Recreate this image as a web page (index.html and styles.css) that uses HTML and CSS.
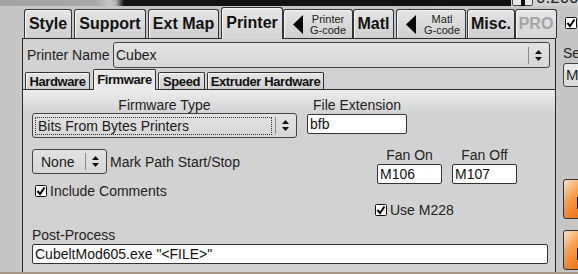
FILE: index.html
```html
<!DOCTYPE html>
<html>
<head>
<meta charset="utf-8">
<link rel="stylesheet" href="styles.css">
</head>
<body>
<div class="topbar">
  <div class="topfill"></div>
  <div class="spin"><span class="spin-mark"></span></div>
  <div class="topval">0.200</div>
</div>
<div class="window">
  <div class="center">
    <div class="tabs">
      <div class="tab w-style">Style</div>
      <div class="tab w-support">Support</div>
      <div class="tab w-ext">Ext Map</div>
      <div class="tab tab-active w-printer">Printer</div>
      <div class="tab tab-gcode w-pg">
        <svg class="tri" width="10" height="19" viewBox="0 0 10 19"><polygon points="10,0 10,19 0,9.5" fill="#000"/></svg>
        <div class="gtext"><span>Printer</span><span>G-code</span></div>
      </div>
      <div class="tab w-matl">Matl</div>
      <div class="tab tab-gcode w-mg">
        <svg class="tri" width="10" height="19" viewBox="0 0 10 19"><polygon points="10,0 10,19 0,9.5" fill="#000"/></svg>
        <div class="gtext"><span>Matl</span><span>G-code</span></div>
      </div>
      <div class="tab w-misc">Misc.</div>
      <div class="tab tab-pro w-pro">PRO</div>
    </div>
    <div class="panel">
      <div class="name-row">
        <span class="lbl name-lbl">Printer Name</span>
        <div class="select sel-name">
          <span class="sel-text">Cubex</span>
          <span class="sel-div"></span>
          <svg class="arrows" width="7" height="11" viewBox="0 0 7 11"><polygon points="0,4 3.5,0 7,4" fill="#111"/><polygon points="0,7 3.5,11 7,7" fill="#111"/></svg>
        </div>
      </div>
      <div class="subtabs">
        <div class="stab sw-hw">Hardware</div>
        <div class="stab stab-active sw-fw">Firmware</div>
        <div class="stab sw-sp">Speed</div>
        <div class="stab sw-ex">Extruder Hardware</div>
      </div>
      <div class="content">
        <div class="row-a">
          <div class="col-fw">
            <div class="lbl center-lbl">Firmware Type</div>
            <div class="select sel-fw">
              <span class="sel-text focus">Bits From Bytes Printers</span>
              <span class="sel-div"></span>
              <svg class="arrows" width="7" height="11" viewBox="0 0 7 11"><polygon points="0,4 3.5,0 7,4" fill="#111"/><polygon points="0,7 3.5,11 7,7" fill="#111"/></svg>
            </div>
          </div>
          <div class="col-ext">
            <div class="lbl center-lbl">File Extension</div>
            <div class="input inp-ext">bfb</div>
          </div>
        </div>
        <div class="row-b">
          <div class="col-left">
            <div class="mark-row">
              <div class="select sel-none">
                <span class="sel-text">None</span>
                <span class="sel-div"></span>
                <svg class="arrows" width="7" height="11" viewBox="0 0 7 11"><polygon points="0,4 3.5,0 7,4" fill="#111"/><polygon points="0,7 3.5,11 7,7" fill="#111"/></svg>
              </div>
              <span class="lbl">Mark Path Start/Stop</span>
            </div>
            <div class="check-row inc-row">
              <svg class="cb" width="12" height="12" viewBox="0 0 12 12"><rect x="0.5" y="0.5" width="11" height="11" rx="1" fill="#fff" stroke="#111"/><path d="M2.5 6 L5 9 L9.5 2.5" fill="none" stroke="#000" stroke-width="2"/></svg>
              <span class="lbl">Include Comments</span>
            </div>
          </div>
          <div class="col-right">
            <div class="fans">
              <div class="fan">
                <div class="lbl center-lbl">Fan On</div>
                <div class="input inp-fan">M106</div>
              </div>
              <div class="fan">
                <div class="lbl center-lbl">Fan Off</div>
                <div class="input inp-fan">M107</div>
              </div>
            </div>
            <div class="check-row m228-row">
              <svg class="cb" width="12" height="12" viewBox="0 0 12 12"><rect x="0.5" y="0.5" width="11" height="11" rx="1" fill="#fff" stroke="#111"/><path d="M2.5 6 L5 9 L9.5 2.5" fill="none" stroke="#000" stroke-width="2"/></svg>
              <span class="lbl">Use M228</span>
            </div>
          </div>
        </div>
        <div class="lbl post-lbl">Post-Process</div>
        <div class="input inp-post">CubeltMod605.exe "&lt;FILE&gt;"</div>
      </div>
    </div>
  </div>
  <div class="side">
    <svg class="cb side-cb" width="12" height="12" viewBox="0 0 12 12"><rect x="0.5" y="0.5" width="11" height="11" rx="1" fill="#fff" stroke="#111"/><path d="M2.5 6 L5 9 L9.5 2.5" fill="none" stroke="#000" stroke-width="2"/></svg>
    <div class="side-lbl">Se</div>
    <div class="side-box">M</div>
    <div class="orange ob1"><span class="ob-mark"></span></div>
    <div class="orange ob2"><span class="ob-mark"></span></div>
  </div>
</div>
<div class="bottomline"></div>
</body>
</html>
```

FILE: styles.css
```css
* { box-sizing: border-box; }
html, body { margin: 0; padding: 0; }
body {
  width: 578px;
  height: 274px;
  overflow: hidden;
  background: #c6c6c6;
  font-family: "Liberation Sans", Arial, sans-serif;
  color: #1e1e1e;
}

/* top strip */
.topbar {
  height: 6px;
  display: flex;
  overflow: hidden;
  background: #d0d0d0;
}
.topfill {
  width: 511px;
  flex: none;
  background: linear-gradient(to right, #a2a2a2 0, #a8a8a8 95px, #c6c6c6 110px, #b0b0b0 116px, #151515 124px, #111 511px);
}
.spin {
  width: 21px;
  flex: none;
  margin-left: 1px;
  margin-top: -4px;
  height: 10px;
  border: 1px solid #444;
  border-radius: 2px;
  background: #e8e8e8;
  display: flex;
  justify-content: center;
}
.spin-mark { width: 4px; height: 9px; background: #111; }
.topval {
  margin-left: 3px;
  margin-top: -10px;
  font-size: 17px;
  line-height: 16px;
  color: #222;
  white-space: nowrap;
}

/* window */
.window {
  display: flex;
  height: 266px;
  padding-left: 22px;
}
.center { width: 534px; flex: none; }

.tabs {
  height: 32px;
  display: flex;
  align-items: flex-end;
  padding-left: 2px;
  position: relative;
  z-index: 2;
}
.tab {
  height: 29px;
  border: 1px solid #333;
  border-bottom: none;
  border-radius: 3px 3px 0 0;
  background: linear-gradient(#e4e4e4, #cfcfcf);
  box-shadow: inset 1px 1px 0 #f6f6f6;
  display: flex;
  align-items: center;
  justify-content: center;
  font-weight: bold;
  font-size: 16px;
  color: #111;
  flex: none;
  white-space: nowrap;
}
.tab-active {
  height: 32px;
  margin-bottom: -1px;
  padding-bottom: 2px;
  background: linear-gradient(#e6e6e6, #d4d4d4);
}
.tab-pro { color: #a4a4a4; background: linear-gradient(#e6e6e6, #d6d6d6); }
.w-style { width: 48px; margin-right: 2px; }
.w-support { width: 72px; margin-right: 2px; }
.w-ext { width: 71px; margin-right: 2px; }
.w-printer { width: 62px; }
.w-pg { width: 70px; }
.w-matl { width: 41px; margin-right: 2px; }
.w-mg { width: 70px; margin-right: 1px; }
.w-misc { width: 48px; }
.w-pro { width: 42px; }

.tab-gcode {
  justify-content: flex-start;
  padding-left: 9px;
  gap: 7px;
}
.tri { display: block; flex: none; }
.gtext {
  display: flex;
  flex-direction: column;
  align-items: center;
  font-weight: normal;
  font-size: 11px;
  line-height: 11px;
  color: #222;
  padding-top: 1px;
  white-space: nowrap;
}
.w-mg .gtext { width: 38px; }

/* panel */
.panel {
  height: 234px;
  border: 1px solid #2a2a2a;
  border-bottom: none;
  background: #d2d2d2;
}
.lbl {
  font-size: 14px;
  line-height: 16px;
  color: #222;
  white-space: nowrap;
}
.name-row {
  display: flex;
  align-items: center;
  padding: 3px 0 0 4px;
}
.name-lbl { width: 86px; }

.select {
  height: 25px;
  border: 1px solid #444;
  border-radius: 3px;
  background: linear-gradient(#e2e2e2, #d6d6d6);
  display: flex;
  align-items: center;
  font-size: 14px;
  color: #1a1a1a;
  flex: none;
}
.sel-text {
  flex: 1;
  padding-left: 2px;
  white-space: nowrap;
}
.sel-div {
  width: 1px;
  height: 17px;
  background: #8a8a8a;
  margin-right: 6px;
}
.arrows { display: block; margin-right: 7px; }
.sel-name { width: 437px; height: 26px; }
.sel-fw { width: 265px; }
.sel-fw .sel-text.focus {
  margin: 0 3px 0 2px;
  padding-left: 2px;
  height: 18px;
  line-height: 16px;
  border: 1px dotted #333;
}
.sel-none { width: 75px; }
.sel-none .sel-text { padding-left: 8px; }

.subtabs {
  height: 21px;
  display: flex;
  align-items: flex-end;
  padding-left: 2px;
  position: relative;
  z-index: 2;
}
.stab {
  height: 17px;
  border: 1px solid #333;
  border-bottom: none;
  border-radius: 2px 2px 0 0;
  background: linear-gradient(#e4e4e4, #d0d0d0);
  box-shadow: inset 1px 1px 0 #f6f6f6;
  font-size: 13px;
  letter-spacing: -0.4px;
  font-weight: bold;
  color: #111;
  display: flex;
  align-items: center;
  justify-content: center;
  flex: none;
  white-space: nowrap;
}
.stab-active {
  height: 21px;
  margin-bottom: -1px;
  background: linear-gradient(#e6e6e6, #eaeaea);
  padding-bottom: 2px;
}
.sw-hw { width: 65px; margin-right: 3px; }
.sw-fw { width: 63px; margin-right: 2px; }
.sw-sp { width: 47px; margin-right: 2px; }
.sw-ex { width: 117px; }

.content {
  border-top: 1px solid #2a2a2a;
  background: linear-gradient(#ededed 0, #d2d2d2 24px);
  height: 183px;
  padding: 8px 0 0 9px;
}
.row-a { display: flex; gap: 10px; }
.col-fw, .col-ext { display: flex; flex-direction: column; }
.center-lbl { text-align: center; line-height: 15px; }
.col-ext .input { margin-top: 1px; }

.input {
  height: 20px;
  border: 1px solid #333;
  border-radius: 2px;
  background: #fff;
  font-size: 14px;
  line-height: 18px;
  padding-left: 2px;
  color: #111;
  white-space: nowrap;
}
.inp-ext { width: 100px; }
.inp-fan { width: 65px; margin-top: 1px; }
.inp-post { width: 516px; margin-top: 1px; }

.row-b { display: flex; }
.col-left { width: 345px; flex: none; }
.mark-row {
  margin-top: 11px;
  display: flex;
  align-items: center;
  gap: 3px;
}
.check-row {
  display: flex;
  align-items: center;
  gap: 3px;
  height: 14px;
}
.cb { display: block; flex: none; }
.inc-row { margin-top: 10px; padding-left: 3px; }
.fans { display: flex; gap: 10px; margin-top: 9px; }
.fan { display: flex; flex-direction: column; }
.fan .center-lbl { line-height: 16px; }
.m228-row { margin-top: 19px; margin-left: -2px; }
.post-lbl { margin-top: 10px; }

/* side */
.side {
  width: 22px;
  flex: none;
  padding: 11px 0 0 7px;
}
.side-cb { margin-left: 2px; }
.side-lbl {
  margin-top: 17px;
  font-size: 14px;
  line-height: 15px;
  color: #222;
  white-space: nowrap;
}
.side-box {
  margin-top: 2px;
  width: 30px;
  height: 24px;
  border: 1px solid #444;
  border-radius: 3px;
  background: linear-gradient(#eaeaea, #d8d8d8);
  font-size: 15px;
  line-height: 22px;
  padding-left: 2px;
}
.orange {
  width: 30px;
  height: 40px;
  border: 1px solid #333;
  border-radius: 3px;
  background: linear-gradient(135deg, #fde2c8 0, #f6a050 35%, #ef7a1e 70%);
  display: flex;
  justify-content: flex-end;
  align-items: center;
}
.ob1 { margin-top: 92px; }
.ob2 { margin-top: 11px; }
.ob-mark { width: 4px; height: 12px; background: #111; margin-right: 11px; margin-top: 8px; }

.bottomline {
  height: 2px;
  background: #a69686;
}
```
